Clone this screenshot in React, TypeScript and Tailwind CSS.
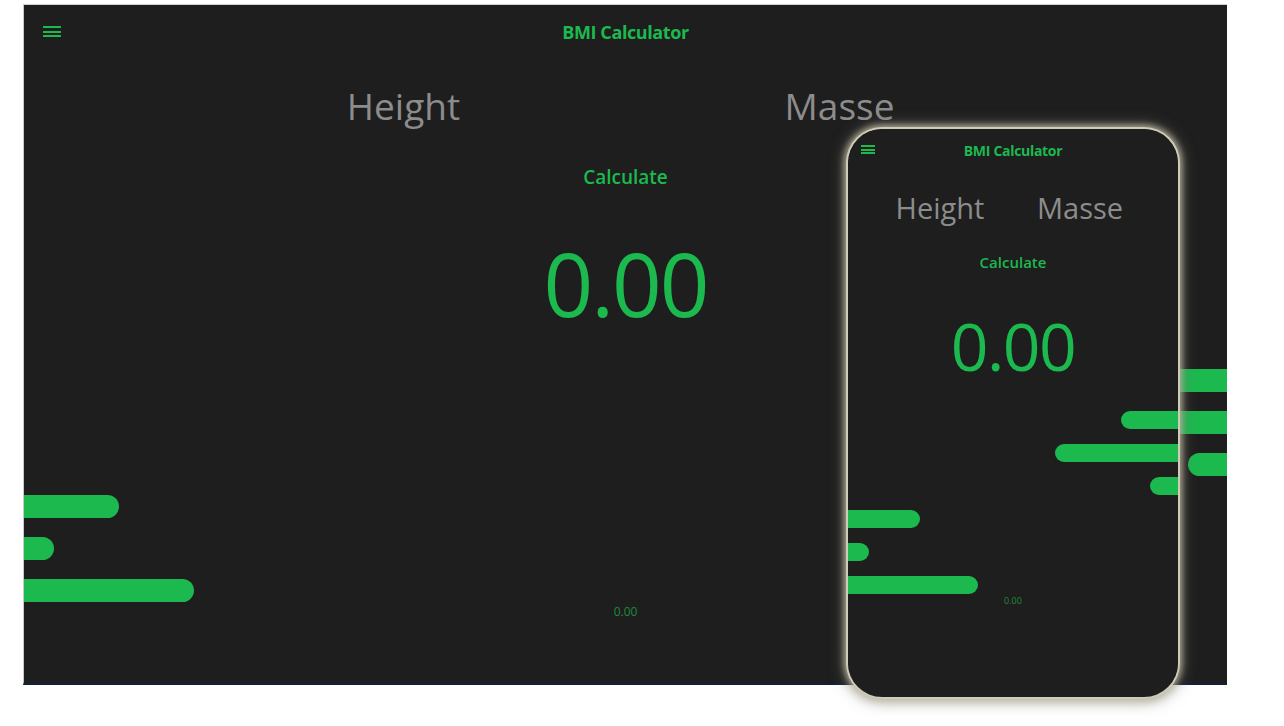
import React from 'react';

const font = { fontFamily: '"Open Sans", "Noto Sans", sans-serif' };

type TScreen = { compact?: boolean };

const Hamburger: React.FC<TScreen> = ({ compact }) => (
    <div className={compact ? 'flex flex-col gap-[1.5px] w-[14px]' : 'flex flex-col gap-[2.7px] w-[18px]'}>
        <span className="h-[2px] bg-[#1bb94e]" />
        <span className="h-[2px] bg-[#1bb94e]" />
        <span className="h-[2px] bg-[#1bb94e]" />
    </div>
);

const mainBars = { right: [74, 160, 39], left: [95, 30, 170] };
const phoneBars = { right: [57, 123, 28], left: [72, 21, 130] };

const BmiScreen: React.FC<TScreen> = ({ compact }) => {
    const bars = compact ? phoneBars : mainBars;
    return (
        <div className="flex flex-col w-full h-full bg-[#1e1e1e]" style={font}>
            <header className={compact ? 'relative flex items-center justify-center h-[42px]' : 'relative flex items-center justify-center h-[54px]'}>
                <div className={compact ? 'absolute left-[13px] top-[16px]' : 'absolute left-[19px] top-[21px]'}>
                    <Hamburger compact={compact} />
                </div>
                <h1 className={compact ? 'text-[14px] font-bold text-[#1bb94e] tracking-[-0.3px]' : 'text-[18px] font-bold text-[#1bb94e] tracking-[-0.4px]'}>
                    BMI Calculator
                </h1>
            </header>

            <div className={compact ? 'flex justify-center mt-[19px] pr-[6px]' : 'flex justify-center mt-[25px] pr-[8px]'}>
                {['Height', 'Masse'].map((label) => (
                    <div
                        key={label}
                        className={compact
                            ? 'w-[140px] text-center text-[29px] leading-[36px] text-[#8c8c8c]'
                            : 'w-[436px] text-center text-[37px] leading-[44px] text-[#8c8c8c]'}
                    >
                        {label}
                    </div>
                ))}
            </div>

            <div className={compact ? 'text-center mt-[26px] text-[15px] leading-[20px] font-semibold text-[#1bb94e]' : 'text-center mt-[37px] text-[19px] leading-[24px] font-semibold text-[#1bb94e]'}>
                Calculate
            </div>

            <div className={compact ? 'text-center mt-[35px] text-[66px] leading-[76px] text-[#1bb94e] tracking-[-1.5px]' : 'text-center mt-[44px] text-[87px] leading-[100px] text-[#1bb94e] tracking-[-2px]'}>
                0.00
            </div>

            <div className={compact ? 'flex flex-col gap-[15px] mt-[28px]' : 'flex flex-col gap-[19px] mt-[36px]'}>
                {bars.right.map((w, i) => (
                    <div
                        key={`r${i}`}
                        className={compact ? 'self-end h-[18px] rounded-l-full bg-[#1bb94e]' : 'self-end h-[23px] rounded-l-full bg-[#1bb94e]'}
                        style={{ width: w }}
                    />
                ))}
                {bars.left.map((w, i) => (
                    <div
                        key={`l${i}`}
                        className={compact ? 'self-start h-[18px] rounded-r-full bg-[#1bb94e]' : 'self-start h-[23px] rounded-r-full bg-[#1bb94e]'}
                        style={{ width: w }}
                    />
                ))}
            </div>

            <div className={compact ? 'text-center mt-[1px] text-[9px] leading-[12px] text-[#1f8a3c]' : 'text-center mt-[2px] text-[12px] leading-[16px] text-[#1f8a3c]'}>
                0.00
            </div>
        </div>
    );
};

const App: React.FC = () => {
    return (
        <div className="relative w-[1284px] h-[726px] bg-white overflow-hidden">
            <div className="ml-[23px] mt-[4px] w-[1204px] h-[681px] border-b-[3px] border-[#172033] border-t border-t-[#d0d0d0] border-l border-l-[#c8c8c8] bg-[#1e1e1e]">
                <BmiScreen />
            </div>

            <div className="absolute left-[848px] top-[129px] w-[330px] h-[568px] rounded-[34px] overflow-hidden shadow-[0_0_0_2px_#cfcbb6,0_0_6px_4px_rgba(190,186,165,0.85),0_0_14px_6px_rgba(120,118,105,0.5)]">
                <BmiScreen compact />
            </div>
        </div>
    );
};

export default App;
